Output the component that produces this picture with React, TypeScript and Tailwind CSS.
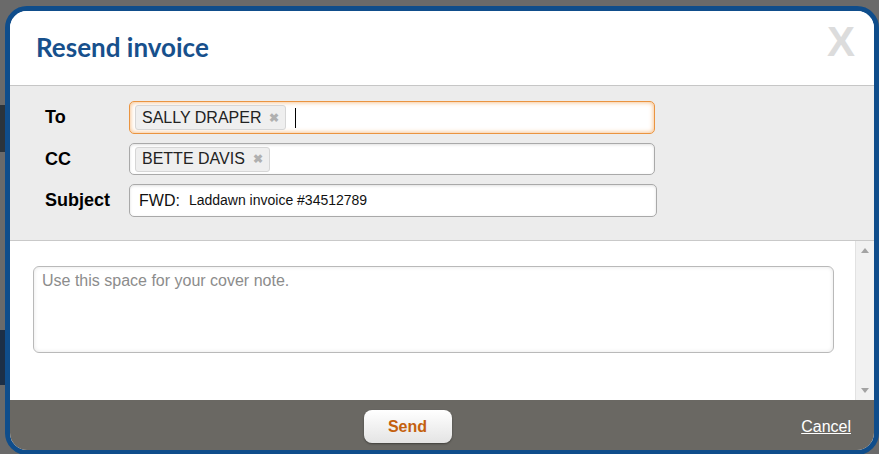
import { useState } from "react";

function Chip({ name }: { name: string }) {
  return (
    <span className="flex items-center h-[25px] pl-[6px] pr-[6px] gap-[8px] bg-[#efefef] border border-[#d6d6d6] rounded-[3px] text-[16px] text-[#222]">
      {name}
      <span className="text-[12px] font-bold text-[#b0b0b0] leading-none">✖</span>
    </span>
  );
}

export default function App() {
  const [note, setNote] = useState("");

  return (
    <div className="relative w-[879px] h-[454px] bg-[#6a6a6a] overflow-hidden font-['Liberation_Sans',Arial,sans-serif]">
      {/* page behind the modal */}
      <div className="flex flex-col w-[6px] pt-[105px] gap-[178px]">
        <div className="h-[47px] bg-[#2b343c]"></div>
        <div className="h-[55px] bg-[#1c2f47]"></div>
      </div>

      <div className="absolute left-[5px] top-[6px] w-[874px] h-[449px] border-[5px] border-[#0f4d8b] rounded-[22px] overflow-hidden bg-white flex flex-col">
        {/* header */}
        <div className="h-[75px] shrink-0 flex items-start justify-between border-b border-[#c6c6c6] bg-white">
          <h1 className="pl-[26px] pt-[21px] text-[26px] leading-[30px] font-bold text-[#17508c] font-['Lato',sans-serif]">
            Resend invoice
          </h1>
          <button className="mr-[19px] mt-[7px] text-[42px] leading-[48px] font-bold text-[#dcdcdc]">X</button>
        </div>

        {/* address fields */}
        <div className="h-[155px] shrink-0 bg-[#ececec] border-b border-[#c9c9c9] pl-[35px] pt-[15px] flex flex-col gap-[9px]">
          <div className="flex items-center">
            <label className="w-[84px] text-[18px] font-bold text-black">To</label>
            <div className="w-[526px] h-[33px] flex items-center gap-[9px] px-[5px] bg-white border border-[#ea9440] rounded-[5px] shadow-[inset_0_0_5px_rgba(240,150,60,0.75)]">
              <Chip name="SALLY DRAPER" />
              <span className="w-px h-[20px] bg-black"></span>
            </div>
          </div>
          <div className="flex items-center">
            <label className="w-[84px] text-[18px] font-bold text-black">CC</label>
            <div className="w-[526px] h-[32px] flex items-center px-[5px] bg-white border border-[#a9a9a9] rounded-[5px] shadow-[inset_0_1px_3px_rgba(0,0,0,0.12)]">
              <Chip name="BETTE DAVIS" />
            </div>
          </div>
          <div className="flex items-center">
            <label className="w-[84px] text-[18px] font-bold text-black">Subject</label>
            <div className="w-[528px] h-[33px] flex items-center gap-[9px] pl-[9px] bg-white border border-[#a9a9a9] rounded-[5px] shadow-[inset_0_1px_3px_rgba(0,0,0,0.12)]">
              <span className="text-[16px] text-[#111]">FWD:</span>
              <span className="text-[14px] text-[#111]">Laddawn invoice #34512789</span>
            </div>
          </div>
        </div>

        {/* note area */}
        <div className="h-[159px] shrink-0 flex bg-white">
          <div className="flex-1 pl-[23px] pt-[25px]">
            <textarea
              value={note}
              onChange={(e) => setNote(e.target.value)}
              placeholder="Use this space for your cover note."
              className="block w-[801px] h-[87px] resize-none px-[8px] py-[4px] text-[16px] leading-[20px] text-[#333] placeholder:text-[#8c8c8c] border border-[#b9b9b9] rounded-[6px] shadow-[inset_0_0_4px_rgba(0,0,0,0.1)] outline-none"
            ></textarea>
          </div>
          <div className="w-[19px] flex flex-col items-center justify-between py-[7px] bg-[#f1f1f1] border-l border-[#e2e2e2]">
            <span className="w-0 h-0 border-x-[4px] border-x-transparent border-b-[5px] border-b-[#a3a3a3]"></span>
            <span className="w-0 h-0 border-x-[4px] border-x-transparent border-t-[5px] border-t-[#a3a3a3]"></span>
          </div>
        </div>

        {/* footer */}
        <div className="flex-1 bg-[#6a6863] relative flex items-start justify-center pt-[10px] pr-[69px]">
          <button className="w-[88px] h-[33px] rounded-[8px] bg-gradient-to-b from-white to-[#e4e4e4] shadow-[0_1px_2px_rgba(0,0,0,0.4)] text-[16px] font-bold text-[#c4600e]">
            Send
          </button>
          <a className="absolute right-[23px] top-[15px] text-[16px] text-white underline">Cancel</a>
        </div>
      </div>
    </div>
  );
}
